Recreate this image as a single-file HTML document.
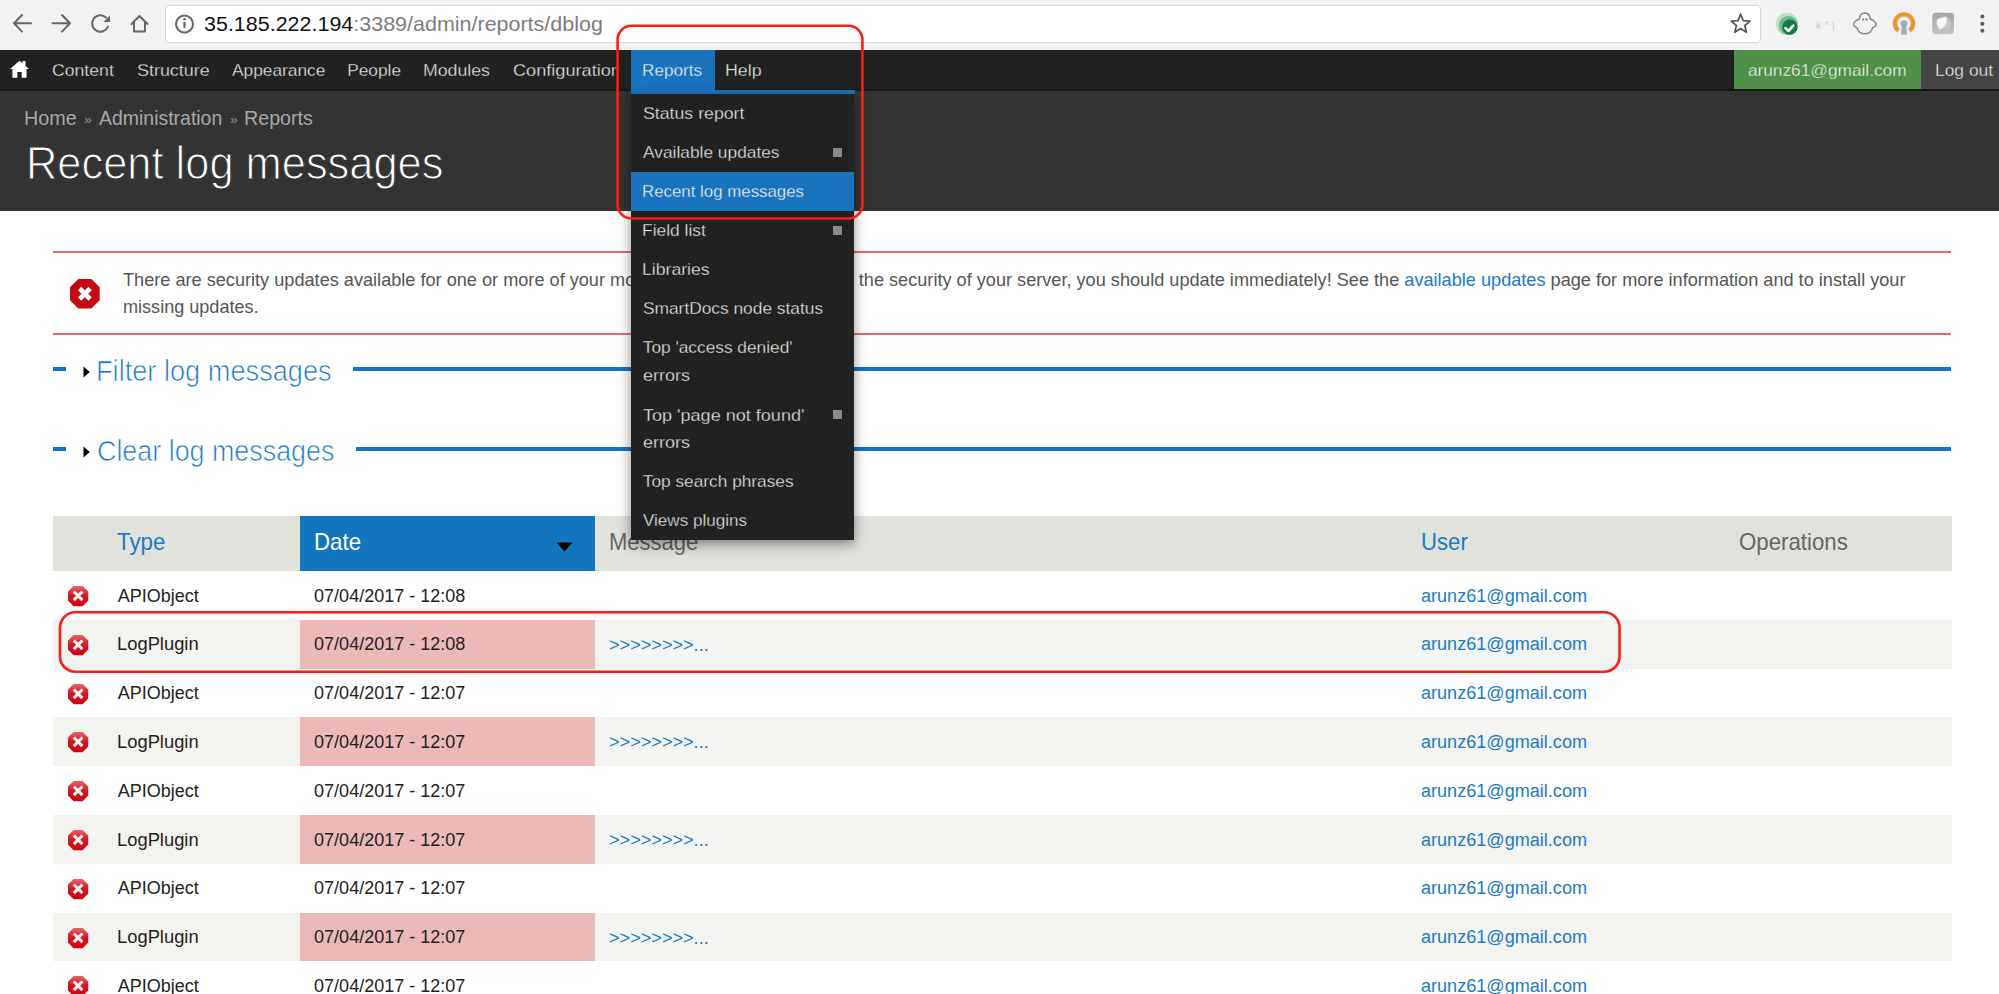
<!DOCTYPE html>
<html><head><meta charset="utf-8">
<style>
*{box-sizing:border-box;margin:0;padding:0}
html,body{width:1999px;height:994px;overflow:hidden;background:#fff;font-family:"Liberation Sans",sans-serif}
.a{position:absolute;white-space:nowrap;line-height:1}
.b{position:absolute}
</style></head><body>

<!-- browser chrome -->
<div class="b" style="left:0;top:0;width:1999px;height:50px;background:#f2f2f2"></div>
<div class="b" style="left:165px;top:5px;width:1596px;height:38px;background:#fff;border:1px solid #d6d6d6;border-radius:4px"></div>
<svg class="b" style="left:0;top:0" width="1999" height="50">
  <g fill="none" stroke="#666" stroke-width="2.0" stroke-linecap="round" stroke-linejoin="round">
    <path d="M31 23.3H14M22 15L14 23.3L22 31.6"/>
    <path d="M52.5 23.3H70M62 15L70 23.3L62 31.6"/>
    <path d="M108 26.5A8.2 8.2 0 1 1 106 17.5"/>
    <path d="M131.5 24L139.5 16L147.5 24M134 22V31.5H145V22"/>
    <circle cx="184.5" cy="24" r="8.5"/>
  </g>
  <path d="M110 15.5V22H103.5Z" fill="#646464"/>
  <rect x="183.4" y="22" width="2.2" height="6" fill="#646464"/>
  <circle cx="184.5" cy="19.3" r="1.3" fill="#646464"/>
</svg>

<!-- toolbar -->
<div class="b" style="left:0;top:50px;width:1999px;height:40px;background:#212121"></div>
<div class="b" style="left:0;top:89px;width:1999px;height:2px;background:#181818"></div>
<div class="b" style="left:631px;top:50px;width:84px;height:40px;background:#1a73bd"></div>
<div class="b" style="left:1734px;top:50px;width:187px;height:39px;background:#4e9047"></div>
<div class="b" style="left:1921px;top:50px;width:78px;height:39px;background:#444"></div>
<svg class="b" style="left:0;top:50px" width="40" height="40">
  <path d="M19.5 10.7L10 18.9H12.4V27.8H17.3V22.1H21.7V27.8H26.6V18.9H29L25.5 15.9V11H22.5V13.3Z" fill="#fff"/>
</svg>

<!-- header -->
<div class="b" style="left:0;top:91px;width:1999px;height:119.5px;background:#333"></div>

<!-- message -->
<div class="b" style="left:53px;top:251px;width:1898px;height:84px;background:#fff;border-top:2px solid #e8696d;border-bottom:2px solid #e8696d"></div>
<svg class="b" style="left:69.7px;top:279px" width="31" height="30">
  <path d="M8.3 0H21.4L29.7 8.3V21.2L21.4 29.5H8.3L0 21.2V8.3Z" fill="#c40a13"/>
  <path d="M9.6 9.5L20.1 20M20.1 9.5L9.6 20" stroke="#fff" stroke-width="4.6" stroke-linecap="butt"/>
</svg>

<!-- details -->
<div class="b" style="left:53px;top:367px;width:13px;height:4px;background:#1a72bb"></div>
<div class="b" style="left:353px;top:367px;width:1598px;height:4px;background:#1a72bb"></div>
<div class="b" style="left:53px;top:447px;width:13px;height:4px;background:#1a72bb"></div>
<div class="b" style="left:356px;top:447px;width:1595px;height:4px;background:#1a72bb"></div>
<svg class="b" style="left:83px;top:366px" width="8" height="12"><path d="M0.5 0.5L6.8 6L0.5 11.5Z" fill="#000"/></svg>
<svg class="b" style="left:83px;top:445.5px" width="8" height="12"><path d="M0.5 0.5L6.8 6L0.5 11.5Z" fill="#000"/></svg>

<!-- table -->
<div class="b" style="left:53px;top:516.4px;width:1899px;height:54.6px;background:#e1e2dc"></div>
<div class="b" style="left:300px;top:516px;width:295px;height:55px;background:#1375bd"></div>
<svg class="b" style="left:556px;top:541.6px" width="17" height="10"><path d="M0.5 0.5H16.5L8.5 9.5Z" fill="#000"/></svg>
<svg class="b" style="left:68px;top:586.00px" width="21" height="21"><defs><linearGradient id="g0" x1="0" y1="0" x2="0" y2="1"><stop offset="0" stop-color="#e8646b"/><stop offset=".45" stop-color="#d41a24"/><stop offset="1" stop-color="#d0000e"/></linearGradient></defs><path d="M5.6 0H14.6L20.2 5.6V14.6L14.6 20.2H5.6L0 14.6V5.6Z" fill="url(#g0)"/><path d="M5.8 5.5L14.4 14.2M14.4 5.5L5.8 14.2" stroke="#eef1f1" stroke-width="3.1"/></svg>
<div class="b" style="left:53px;top:619.80px;width:1899px;height:48.8px;background:#f3f3ef"></div>
<div class="b" style="left:300px;top:619.80px;width:295px;height:48.8px;background:#ecb9b9"></div>
<svg class="b" style="left:68px;top:634.80px" width="21" height="21"><defs><linearGradient id="g1" x1="0" y1="0" x2="0" y2="1"><stop offset="0" stop-color="#e8646b"/><stop offset=".45" stop-color="#d41a24"/><stop offset="1" stop-color="#d0000e"/></linearGradient></defs><path d="M5.6 0H14.6L20.2 5.6V14.6L14.6 20.2H5.6L0 14.6V5.6Z" fill="url(#g1)"/><path d="M5.8 5.5L14.4 14.2M14.4 5.5L5.8 14.2" stroke="#eef1f1" stroke-width="3.1"/></svg>
<svg class="b" style="left:68px;top:683.60px" width="21" height="21"><defs><linearGradient id="g2" x1="0" y1="0" x2="0" y2="1"><stop offset="0" stop-color="#e8646b"/><stop offset=".45" stop-color="#d41a24"/><stop offset="1" stop-color="#d0000e"/></linearGradient></defs><path d="M5.6 0H14.6L20.2 5.6V14.6L14.6 20.2H5.6L0 14.6V5.6Z" fill="url(#g2)"/><path d="M5.8 5.5L14.4 14.2M14.4 5.5L5.8 14.2" stroke="#eef1f1" stroke-width="3.1"/></svg>
<div class="b" style="left:53px;top:717.40px;width:1899px;height:48.8px;background:#f3f3ef"></div>
<div class="b" style="left:300px;top:717.40px;width:295px;height:48.8px;background:#ecb9b9"></div>
<svg class="b" style="left:68px;top:732.40px" width="21" height="21"><defs><linearGradient id="g3" x1="0" y1="0" x2="0" y2="1"><stop offset="0" stop-color="#e8646b"/><stop offset=".45" stop-color="#d41a24"/><stop offset="1" stop-color="#d0000e"/></linearGradient></defs><path d="M5.6 0H14.6L20.2 5.6V14.6L14.6 20.2H5.6L0 14.6V5.6Z" fill="url(#g3)"/><path d="M5.8 5.5L14.4 14.2M14.4 5.5L5.8 14.2" stroke="#eef1f1" stroke-width="3.1"/></svg>
<svg class="b" style="left:68px;top:781.20px" width="21" height="21"><defs><linearGradient id="g4" x1="0" y1="0" x2="0" y2="1"><stop offset="0" stop-color="#e8646b"/><stop offset=".45" stop-color="#d41a24"/><stop offset="1" stop-color="#d0000e"/></linearGradient></defs><path d="M5.6 0H14.6L20.2 5.6V14.6L14.6 20.2H5.6L0 14.6V5.6Z" fill="url(#g4)"/><path d="M5.8 5.5L14.4 14.2M14.4 5.5L5.8 14.2" stroke="#eef1f1" stroke-width="3.1"/></svg>
<div class="b" style="left:53px;top:815.00px;width:1899px;height:48.8px;background:#f3f3ef"></div>
<div class="b" style="left:300px;top:815.00px;width:295px;height:48.8px;background:#ecb9b9"></div>
<svg class="b" style="left:68px;top:830.00px" width="21" height="21"><defs><linearGradient id="g5" x1="0" y1="0" x2="0" y2="1"><stop offset="0" stop-color="#e8646b"/><stop offset=".45" stop-color="#d41a24"/><stop offset="1" stop-color="#d0000e"/></linearGradient></defs><path d="M5.6 0H14.6L20.2 5.6V14.6L14.6 20.2H5.6L0 14.6V5.6Z" fill="url(#g5)"/><path d="M5.8 5.5L14.4 14.2M14.4 5.5L5.8 14.2" stroke="#eef1f1" stroke-width="3.1"/></svg>
<svg class="b" style="left:68px;top:878.80px" width="21" height="21"><defs><linearGradient id="g6" x1="0" y1="0" x2="0" y2="1"><stop offset="0" stop-color="#e8646b"/><stop offset=".45" stop-color="#d41a24"/><stop offset="1" stop-color="#d0000e"/></linearGradient></defs><path d="M5.6 0H14.6L20.2 5.6V14.6L14.6 20.2H5.6L0 14.6V5.6Z" fill="url(#g6)"/><path d="M5.8 5.5L14.4 14.2M14.4 5.5L5.8 14.2" stroke="#eef1f1" stroke-width="3.1"/></svg>
<div class="b" style="left:53px;top:912.60px;width:1899px;height:48.8px;background:#f3f3ef"></div>
<div class="b" style="left:300px;top:912.60px;width:295px;height:48.8px;background:#ecb9b9"></div>
<svg class="b" style="left:68px;top:927.60px" width="21" height="21"><defs><linearGradient id="g7" x1="0" y1="0" x2="0" y2="1"><stop offset="0" stop-color="#e8646b"/><stop offset=".45" stop-color="#d41a24"/><stop offset="1" stop-color="#d0000e"/></linearGradient></defs><path d="M5.6 0H14.6L20.2 5.6V14.6L14.6 20.2H5.6L0 14.6V5.6Z" fill="url(#g7)"/><path d="M5.8 5.5L14.4 14.2M14.4 5.5L5.8 14.2" stroke="#eef1f1" stroke-width="3.1"/></svg>
<svg class="b" style="left:68px;top:976.40px" width="21" height="21"><defs><linearGradient id="g8" x1="0" y1="0" x2="0" y2="1"><stop offset="0" stop-color="#e8646b"/><stop offset=".45" stop-color="#d41a24"/><stop offset="1" stop-color="#d0000e"/></linearGradient></defs><path d="M5.6 0H14.6L20.2 5.6V14.6L14.6 20.2H5.6L0 14.6V5.6Z" fill="url(#g8)"/><path d="M5.8 5.5L14.4 14.2M14.4 5.5L5.8 14.2" stroke="#eef1f1" stroke-width="3.1"/></svg>

<!-- texts -->
<div class="a" style="left:203.80px;top:13.51px;font-size:20.9px;color:#111;transform:scaleX(1.0281);transform-origin:0 0;">35.185.222.194<span style="color:#7d7d7d">:3389/admin/reports/dblog</span></div>
<div class="a" style="left:52.00px;top:62.26px;font-size:17.3px;color:#e6e6e6;transform:scaleX(1.0210);transform-origin:0 0;-webkit-text-stroke:0.3px #212121;">Content</div>
<div class="a" style="left:136.60px;top:62.26px;font-size:17.3px;color:#e6e6e6;transform:scaleX(1.0360);transform-origin:0 0;-webkit-text-stroke:0.3px #212121;">Structure</div>
<div class="a" style="left:231.60px;top:62.26px;font-size:17.3px;color:#e6e6e6;transform:scaleX(1.0023);transform-origin:0 0;-webkit-text-stroke:0.3px #212121;">Appearance</div>
<div class="a" style="left:347.20px;top:62.26px;font-size:17.3px;color:#e6e6e6;-webkit-text-stroke:0.3px #212121;">People</div>
<div class="a" style="left:422.78px;top:62.26px;font-size:17.3px;color:#e6e6e6;transform:scaleX(1.0235);transform-origin:0 0;-webkit-text-stroke:0.3px #212121;">Modules</div>
<div style="position:absolute;left:0;top:0;width:617px;height:994px;overflow:hidden"><div class="a" style="left:513.00px;top:62.26px;font-size:17.3px;color:#e6e6e6;transform:scaleX(1.0500);transform-origin:0 0;-webkit-text-stroke:0.3px #212121;">Configuration</div></div>
<div class="a" style="left:642.21px;top:62.26px;font-size:17.3px;color:#f0f0f0;transform:scaleX(0.9922);transform-origin:0 0;-webkit-text-stroke:0.3px #1a73bd;">Reports</div>
<div class="a" style="left:725.27px;top:62.26px;font-size:17.3px;color:#e6e6e6;transform:scaleX(1.0315);transform-origin:0 0;-webkit-text-stroke:0.3px #212121;">Help</div>
<div class="a" style="left:1747.90px;top:62.26px;font-size:17.3px;color:#eef3ec;-webkit-text-stroke:0.3px #4e9047;">arunz61@gmail.com</div>
<div class="a" style="left:1934.59px;top:62.26px;font-size:17.3px;color:#e8e8e8;transform:scaleX(1.0078);transform-origin:0 0;-webkit-text-stroke:0.3px #444;">Log out</div>
<div class="a" style="left:24.36px;top:106.72px;font-size:21px;color:#a8a8a8;transform:scaleX(0.9404);transform-origin:0 0;">Home</div>
<div class="a" style="left:84.30px;top:112.60px;font-size:13px;color:#a8a8a8;transform:scaleX(1.0857);transform-origin:0 0;-webkit-text-stroke:0.2px #333;">»</div>
<div class="a" style="left:99.40px;top:106.72px;font-size:21px;color:#a8a8a8;transform:scaleX(0.9262);transform-origin:0 0;">Administration</div>
<div class="a" style="left:230.00px;top:112.60px;font-size:13px;color:#a8a8a8;transform:scaleX(1.0857);transform-origin:0 0;-webkit-text-stroke:0.2px #333;">»</div>
<div class="a" style="left:244.06px;top:106.72px;font-size:21px;color:#a8a8a8;transform:scaleX(0.9371);transform-origin:0 0;">Reports</div>
<div class="a" style="left:26.01px;top:140.07px;font-size:46.7px;color:#ffffff;transform:scaleX(0.9298);transform-origin:0 0;-webkit-text-stroke:1.1px #333;">Recent log messages</div>
<div class="a" style="left:123.30px;top:271.14px;font-size:18.5px;color:#555555;transform:scaleX(0.9806);transform-origin:0 0;">There are security updates available for one or more of your modules or themes. To ensure the security of your server, you should update immediately! See the <span style="color:#1b7bc6">available updates</span> page for more information and to install your</div>
<div class="a" style="left:123.12px;top:298.14px;font-size:18.5px;color:#555555;transform:scaleX(0.9767);transform-origin:0 0;">missing updates.</div>
<div class="a" style="left:95.74px;top:356.20px;font-size:29.3px;color:#1b76c2;transform:scaleX(0.9278);transform-origin:0 0;-webkit-text-stroke:0.7px #fff;">Filter log messages</div>
<div class="a" style="left:96.68px;top:435.50px;font-size:29.3px;color:#1b76c2;transform:scaleX(0.9170);transform-origin:0 0;-webkit-text-stroke:0.7px #fff;">Clear log messages</div>
<div class="a" style="left:116.90px;top:530.05px;font-size:23.8px;color:#1b7bc6;transform:scaleX(0.9366);transform-origin:0 0;">Type</div>
<div class="a" style="left:313.76px;top:530.05px;font-size:23.8px;color:#ffffff;transform:scaleX(0.9361);transform-origin:0 0;">Date</div>
<div class="a" style="left:609.07px;top:530.05px;font-size:23.8px;color:#666666;transform:scaleX(0.9253);transform-origin:0 0;">Message</div>
<div class="a" style="left:1421.07px;top:530.05px;font-size:23.8px;color:#1b7bc6;transform:scaleX(0.9307);transform-origin:0 0;">User</div>
<div class="a" style="left:1738.76px;top:530.05px;font-size:23.8px;color:#666666;transform:scaleX(0.9350);transform-origin:0 0;">Operations</div>
<div class="a" style="left:117.70px;top:586.56px;font-size:18px;color:#222222;">APIObject</div>
<div class="a" style="left:314.10px;top:586.56px;font-size:18px;color:#222222;">07/04/2017 - 12:08</div>
<div class="a" style="left:1421.30px;top:586.56px;font-size:18px;color:#1b7bc6;transform:scaleX(1.0040);transform-origin:0 0;">arunz61@gmail.com</div>
<div class="a" style="left:116.68px;top:635.36px;font-size:18px;color:#222222;transform:scaleX(1.0198);transform-origin:0 0;">LogPlugin</div>
<div class="a" style="left:314.10px;top:635.36px;font-size:18px;color:#222222;">07/04/2017 - 12:08</div>
<div class="a" style="left:608.50px;top:635.86px;font-size:18px;color:#1b7bc6;transform:scaleX(1.0062);transform-origin:0 0;">&gt;&gt;&gt;&gt;&gt;&gt;&gt;&gt;...</div>
<div class="a" style="left:1421.30px;top:635.36px;font-size:18px;color:#1b7bc6;transform:scaleX(1.0040);transform-origin:0 0;">arunz61@gmail.com</div>
<div class="a" style="left:117.70px;top:684.16px;font-size:18px;color:#222222;">APIObject</div>
<div class="a" style="left:314.10px;top:684.16px;font-size:18px;color:#222222;">07/04/2017 - 12:07</div>
<div class="a" style="left:1421.30px;top:684.16px;font-size:18px;color:#1b7bc6;transform:scaleX(1.0040);transform-origin:0 0;">arunz61@gmail.com</div>
<div class="a" style="left:116.68px;top:732.96px;font-size:18px;color:#222222;transform:scaleX(1.0198);transform-origin:0 0;">LogPlugin</div>
<div class="a" style="left:314.10px;top:732.96px;font-size:18px;color:#222222;">07/04/2017 - 12:07</div>
<div class="a" style="left:608.50px;top:733.46px;font-size:18px;color:#1b7bc6;transform:scaleX(1.0062);transform-origin:0 0;">&gt;&gt;&gt;&gt;&gt;&gt;&gt;&gt;...</div>
<div class="a" style="left:1421.30px;top:732.96px;font-size:18px;color:#1b7bc6;transform:scaleX(1.0040);transform-origin:0 0;">arunz61@gmail.com</div>
<div class="a" style="left:117.70px;top:781.76px;font-size:18px;color:#222222;">APIObject</div>
<div class="a" style="left:314.10px;top:781.76px;font-size:18px;color:#222222;">07/04/2017 - 12:07</div>
<div class="a" style="left:1421.30px;top:781.76px;font-size:18px;color:#1b7bc6;transform:scaleX(1.0040);transform-origin:0 0;">arunz61@gmail.com</div>
<div class="a" style="left:116.68px;top:830.56px;font-size:18px;color:#222222;transform:scaleX(1.0198);transform-origin:0 0;">LogPlugin</div>
<div class="a" style="left:314.10px;top:830.56px;font-size:18px;color:#222222;">07/04/2017 - 12:07</div>
<div class="a" style="left:608.50px;top:831.06px;font-size:18px;color:#1b7bc6;transform:scaleX(1.0062);transform-origin:0 0;">&gt;&gt;&gt;&gt;&gt;&gt;&gt;&gt;...</div>
<div class="a" style="left:1421.30px;top:830.56px;font-size:18px;color:#1b7bc6;transform:scaleX(1.0040);transform-origin:0 0;">arunz61@gmail.com</div>
<div class="a" style="left:117.70px;top:879.36px;font-size:18px;color:#222222;">APIObject</div>
<div class="a" style="left:314.10px;top:879.36px;font-size:18px;color:#222222;">07/04/2017 - 12:07</div>
<div class="a" style="left:1421.30px;top:879.36px;font-size:18px;color:#1b7bc6;transform:scaleX(1.0040);transform-origin:0 0;">arunz61@gmail.com</div>
<div class="a" style="left:116.68px;top:928.16px;font-size:18px;color:#222222;transform:scaleX(1.0198);transform-origin:0 0;">LogPlugin</div>
<div class="a" style="left:314.10px;top:928.16px;font-size:18px;color:#222222;">07/04/2017 - 12:07</div>
<div class="a" style="left:608.50px;top:928.66px;font-size:18px;color:#1b7bc6;transform:scaleX(1.0062);transform-origin:0 0;">&gt;&gt;&gt;&gt;&gt;&gt;&gt;&gt;...</div>
<div class="a" style="left:1421.30px;top:928.16px;font-size:18px;color:#1b7bc6;transform:scaleX(1.0040);transform-origin:0 0;">arunz61@gmail.com</div>
<div class="a" style="left:117.70px;top:976.96px;font-size:18px;color:#222222;">APIObject</div>
<div class="a" style="left:314.10px;top:976.96px;font-size:18px;color:#222222;">07/04/2017 - 12:07</div>
<div class="a" style="left:1421.30px;top:976.96px;font-size:18px;color:#1b7bc6;transform:scaleX(1.0040);transform-origin:0 0;">arunz61@gmail.com</div>

<!-- dropdown -->
<div class="b" style="left:631px;top:89.5px;width:223.5px;height:4.5px;background:#1a73bd"></div>
<div class="b" style="left:631px;top:94px;width:223px;height:445.5px;background:#212121;box-shadow:0 4px 12px rgba(0,0,0,.45)"></div>
<div class="b" style="left:631px;top:172px;width:223px;height:39px;background:#1a73bd"></div>
<div class="b" style="left:833px;top:148px;width:9px;height:9px;background:#8a8a8a"></div>
<div class="b" style="left:833px;top:226px;width:9px;height:9px;background:#8a8a8a"></div>
<div class="b" style="left:833px;top:410px;width:9px;height:9px;background:#8a8a8a"></div>
<div class="a" style="left:642.80px;top:105.06px;font-size:17.3px;color:#e6e6e6;transform:scaleX(1.0249);transform-origin:0 0;-webkit-text-stroke:0.3px #212121;">Status report</div>
<div class="a" style="left:642.80px;top:144.06px;font-size:17.3px;color:#e6e6e6;transform:scaleX(1.0031);transform-origin:0 0;-webkit-text-stroke:0.3px #212121;">Available updates</div>
<div class="a" style="left:641.83px;top:183.06px;font-size:17.3px;color:#f2f2f2;transform:scaleX(0.9750);transform-origin:0 0;-webkit-text-stroke:0.3px #1a73bd;">Recent log messages</div>
<div class="a" style="left:641.79px;top:222.16px;font-size:17.3px;color:#e6e6e6;transform:scaleX(1.0068);transform-origin:0 0;-webkit-text-stroke:0.3px #212121;">Field list</div>
<div class="a" style="left:641.78px;top:261.16px;font-size:17.3px;color:#e6e6e6;transform:scaleX(1.0208);transform-origin:0 0;-webkit-text-stroke:0.3px #212121;">Libraries</div>
<div class="a" style="left:642.80px;top:300.16px;font-size:17.3px;color:#e6e6e6;transform:scaleX(1.0024);transform-origin:0 0;-webkit-text-stroke:0.3px #212121;">SmartDocs node status</div>
<div class="a" style="left:642.80px;top:339.26px;font-size:17.3px;color:#e6e6e6;-webkit-text-stroke:0.3px #212121;">Top &#x27;access denied&#x27;</div>
<div class="a" style="left:642.80px;top:367.26px;font-size:17.3px;color:#e6e6e6;transform:scaleX(1.0399);transform-origin:0 0;-webkit-text-stroke:0.3px #212121;">errors</div>
<div class="a" style="left:642.80px;top:406.66px;font-size:17.3px;color:#e6e6e6;transform:scaleX(1.0442);transform-origin:0 0;-webkit-text-stroke:0.3px #212121;">Top &#x27;page not found&#x27;</div>
<div class="a" style="left:642.80px;top:434.46px;font-size:17.3px;color:#e6e6e6;transform:scaleX(1.0399);transform-origin:0 0;-webkit-text-stroke:0.3px #212121;">errors</div>
<div class="a" style="left:642.80px;top:473.06px;font-size:17.3px;color:#e6e6e6;-webkit-text-stroke:0.3px #212121;">Top search phrases</div>
<div class="a" style="left:642.80px;top:512.26px;font-size:17.3px;color:#e6e6e6;transform:scaleX(0.9876);transform-origin:0 0;-webkit-text-stroke:0.3px #212121;">Views plugins</div>

<!-- annotations -->
<svg class="b" style="left:0;top:0" width="1999" height="994">
  <g fill="none" stroke="#fd1d14" stroke-width="2.6">
    <rect x="617.6" y="25.7" width="244.8" height="192.8" rx="14"/>
    <rect x="60" y="612.2" width="1559.6" height="59.6" rx="15.5"/>
  </g>
</svg>

<!-- chrome right icons -->
<svg class="b" style="left:1720px;top:0" width="279" height="50">
  <defs>
    <linearGradient id="gsq" x1="0" y1="0" x2="0" y2="1"><stop offset="0" stop-color="#a3a3a3"/><stop offset="1" stop-color="#c4c4c4"/></linearGradient>
    <radialGradient id="gci" cx=".6" cy=".55" r=".5"><stop offset="0" stop-color="#d0d0d0"/><stop offset="1" stop-color="#bdbdbd"/></radialGradient>
  </defs>
  <path d="M20.6 14.2L23.2 20.6L30 21.1L24.8 25.5L26.4 32.2L20.6 28.6L14.8 32.2L16.4 25.5L11.2 21.1L18 20.6Z" fill="none" stroke="#5a5a5a" stroke-width="1.8" stroke-linejoin="round"/>
  <circle cx="67" cy="23.8" r="11.1" fill="#bfdfc5"/>
  <circle cx="68.4" cy="25.5" r="9.5" fill="#6fb98b"/>
  <circle cx="69.8" cy="27.1" r="7.7" fill="#137a43"/>
  <path d="M65.6 28.2L68.6 30.9L73.3 25.7" fill="none" stroke="#fff" stroke-width="2.7" stroke-linecap="round" stroke-linejoin="round"/>
  <text x="96" y="29" font-family="Liberation Sans" font-size="11" fill="#cdcdcd">k * |</text>
  <path d="M144.8 12.9C148 12.9 150 15.3 150.4 19.3C153 19.9 156.3 22.2 156 24.8C155.8 26.5 154.2 26.9 152.6 27.7C152.2 31.2 148.8 33.8 144.8 33.8C140.8 33.8 137.4 31.2 137 27.7C135.4 26.9 133.8 26.5 133.6 24.8C133.3 22.2 136.6 19.9 139.2 19.3C139.6 15.3 141.6 12.9 144.8 12.9Z" fill="none" stroke="#858585" stroke-width="1.5"/>
  <ellipse cx="143" cy="19.5" rx="1" ry="1.3" fill="#808080"/><ellipse cx="146.4" cy="19.5" rx="1" ry="1.3" fill="#808080"/>
  <path d="M178.6 30.6A9 9 0 1 1 189.4 30.6" fill="none" stroke="#f39330" stroke-width="4.4"/>
  <circle cx="184" cy="23.6" r="3.4" fill="#94adc5"/>
  <path d="M182 25.6L180.9 34.6H187.1L186 25.6Z" fill="#94adc5"/>
  <rect x="212.3" y="12.8" width="21.6" height="21.5" rx="3.5" fill="url(#gsq)"/>
  <circle cx="223.8" cy="23.6" r="7.6" fill="url(#gci)"/>
  <path d="M217.3 19.6C219.8 18 223.8 17 226.4 17.1C227.6 21.6 224.6 27.6 220.1 29.7C217.3 27 215.6 23 217.3 19.6Z" fill="#f8f8f8"/>
  <circle cx="262.4" cy="16.6" r="2" fill="#5a5a5a"/>
  <circle cx="262.4" cy="23.7" r="2" fill="#5a5a5a"/>
  <circle cx="262.4" cy="30.7" r="2" fill="#5a5a5a"/>
</svg>

</body></html>
